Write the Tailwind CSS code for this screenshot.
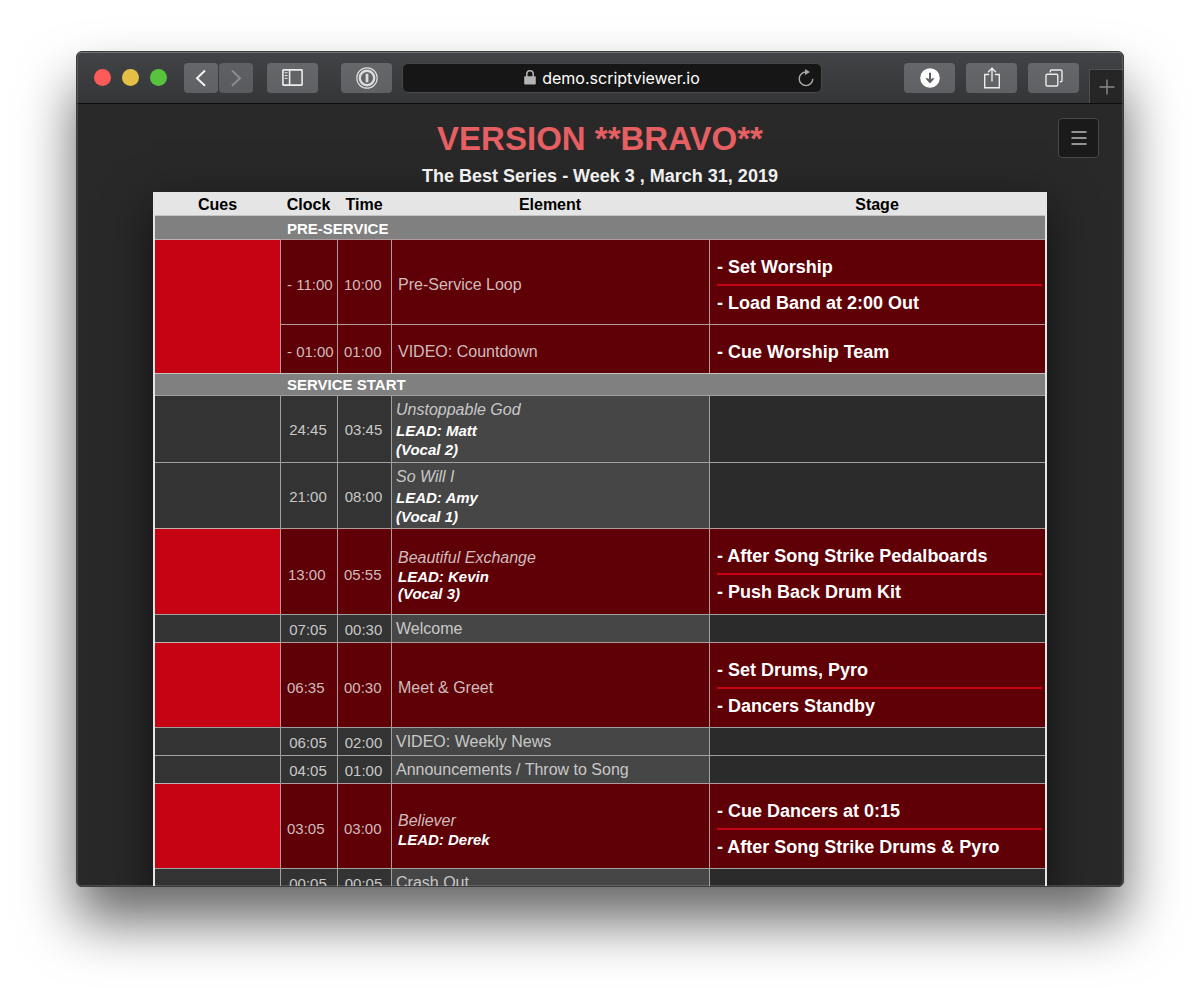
<!DOCTYPE html>
<html lang="en">
  <head>
    <meta charset="UTF-8" />
    <meta name="viewport" content="width=device-width, initial-scale=1.0" />
    <title>ScriptViewer - Version Bravo</title>
    <!-- Tailwind CSS -->
    <script src="https://cdn.jsdelivr.net/npm/@tailwindcss/browser@4"></script>
  </head>
  <body class="bg-white font-['Liberation_Sans',Arial,sans-serif]">
    <div class="h-screen overflow-hidden px-[76px] pt-[51px] pb-[101px]">
      <!-- Browser window -->
      <div class="relative flex h-full flex-col overflow-hidden rounded-md border border-[#3a3b3c] bg-[#292929] shadow-[0_34px_56px_rgba(0,0,0,0.6)]">
        <!-- Toolbar -->
        <div class="flex h-[52px] shrink-0 items-center border-b border-[#0e0e0e] bg-linear-to-b from-[#424346] to-[#353638] pl-[17px]">
          <div class="flex gap-[11px]">
            <span class="size-[17px] rounded-full bg-[#fc5b57]"></span>
            <span class="size-[17px] rounded-full bg-[#e5bf45]"></span>
            <span class="size-[17px] rounded-full bg-[#57c33f]"></span>
          </div>
          <div class="ml-[17px] flex gap-px">
            <button aria-label="Back" class="flex h-[30px] w-[34px] items-center justify-center rounded bg-linear-to-b from-[#66676a] to-[#606164]">
              <svg class="h-5 w-5" viewBox="0 0 20 20" fill="none" stroke="#f4f4f4" stroke-width="2"><path d="M14 2.5 6 10.2l8 7.6" /></svg>
            </button>
            <button aria-label="Forward" class="flex h-[30px] w-[34px] items-center justify-center rounded bg-linear-to-b from-[#5f6063] to-[#5a5b5e]">
              <svg class="h-5 w-5" viewBox="0 0 20 20" fill="none" stroke="#8b8c8e" stroke-width="2"><path d="M6 2.5l8 7.7-8 7.6" /></svg>
            </button>
          </div>
          <button aria-label="Show sidebar" class="ml-3.5 flex h-[30px] w-[51px] items-center justify-center rounded bg-linear-to-b from-[#66676a] to-[#606164]">
            <svg class="h-[17px] w-[21px]" viewBox="0 0 21 17" fill="none" stroke="#ececec" stroke-width="1.6"><rect x="0.9" y="0.9" width="19.2" height="15.2" rx="0.6" /><path d="M7.6 1v15" /><path d="M2.6 3.8h3M2.6 6.5h3M2.6 9.2h3" stroke-width="1.1" /></svg>
          </button>
          <button aria-label="1Password" class="ml-[23px] flex h-[30px] w-[51px] items-center justify-center rounded bg-linear-to-b from-[#66676a] to-[#606164]">
            <svg class="h-[22px] w-[22px]" viewBox="0 0 22 22" fill="none" stroke="#dcdcdc"><circle cx="11" cy="11" r="10.2" stroke-width="1.2" /><circle cx="11" cy="11" r="7.2" stroke-width="2.4" /><path d="M11 6.8v8.4" stroke-width="2.8" /></svg>
          </button>
          <div class="ml-2.5 flex h-[30px] min-w-0 flex-1 items-center rounded-md border border-[#48494b] bg-[#161616] pr-1.5 pl-6 text-white">
            <div class="flex flex-1 items-center justify-center gap-1.5">
              <svg class="h-[15px] w-3" viewBox="0 0 12 15"><path d="M2.8 7V4a3.2 3.2 0 0 1 6.4 0V7" fill="none" stroke="#b4b4b4" stroke-width="1.5" /><rect x="0.2" y="6.2" width="11.6" height="8.4" rx="0.8" fill="#b4b4b4" /></svg>
              <span class="font-[Inter,sans-serif] text-[16px] leading-5">demo.scriptviewer.io</span>
            </div>
            <button aria-label="Reload">
              <svg class="h-[18px] w-[18px]" viewBox="0 0 18 18" fill="none" stroke="#a8a8a8" stroke-width="1.4"><path d="M9 3A6.8 6.8 0 1 0 15.8 9.8" /><path d="M8 0v6l5-3z" fill="#a8a8a8" stroke="none" /></svg>
            </button>
          </div>
          <div class="ml-[82px] flex gap-[11px]">
            <button aria-label="Downloads" class="flex h-[30px] w-[51px] items-center justify-center rounded bg-linear-to-b from-[#66676a] to-[#606164]">
              <svg class="h-5 w-5" viewBox="0 0 20 20"><circle cx="10" cy="10" r="9.8" fill="#fff" /><path d="M10 4.8v7" fill="none" stroke="#5a5b5e" stroke-width="2" /><path d="M5.4 10.2h2.4L10 12l2.2-1.8h2.4L10 15.4z" fill="#5a5b5e" /></svg>
            </button>
            <button aria-label="Share" class="flex h-[30px] w-[51px] items-center justify-center rounded bg-linear-to-b from-[#66676a] to-[#606164]">
              <svg class="h-[22px] w-[18px]" viewBox="0 0 18 22" fill="none" stroke="#ececec" stroke-width="1.4"><path d="M6.2 7.5H1.7v13.2h14.6V7.5h-4.5" /><path d="M9 14.5V1.5M5 5.2l4-4 4 4" /></svg>
            </button>
            <button aria-label="Show all tabs" class="flex h-[30px] w-[51px] items-center justify-center rounded bg-linear-to-b from-[#66676a] to-[#606164]">
              <svg class="h-[18px] w-[18px]" viewBox="0 0 18 18" fill="none" stroke="#ececec" stroke-width="1.4"><rect x="1" y="5.2" width="11.8" height="11.8" rx="1.2" /><path d="M5.3 3.4V2.2a1.2 1.2 0 0 1 1.2-1.2h9.3A1.2 1.2 0 0 1 17 2.2v9.4a1.2 1.2 0 0 1-1.2 1.2h-1" /></svg>
            </button>
          </div>
          <button aria-label="New tab" class="ml-2.5 flex h-[34px] w-[34px] items-center justify-center self-end border-t border-l border-[#4e4f51] bg-[#262627]">
            <svg class="h-4 w-4" viewBox="0 0 16 16" fill="none" stroke="#8a8a8a" stroke-width="1.4"><path d="M8 0.5v15M0.5 8h15" /></svg>
          </button>
        </div>

        <!-- Page -->
        <main class="flex-1 overflow-hidden">
          <header class="grid grid-cols-[1fr_auto_1fr] px-6 pb-1">
            <div class="col-start-2 pt-[15px] text-center font-bold">
              <h1 class="text-[33px] leading-10 text-[#e65f62]">VERSION **BRAVO**</h1>
              <p class="mt-[5px] text-[18px] leading-6 text-[#f0f0f0]">The Best Series - Week 3 , March 31, 2019</p>
            </div>
            <button aria-label="Menu" class="mt-3.5 flex h-10 w-[41px] items-center justify-center justify-self-end rounded border border-[#484848] bg-[#1a1a1a]">
              <svg class="h-[14px] w-4" viewBox="0 0 16 14" stroke="#929292" stroke-width="2"><path d="M0.5 1h15M0.5 7h15M0.5 13h15" /></svg>
            </button>
          </header>

          <!-- Run sheet -->
          <div class="mx-[76px] border-x-2 border-[#e5e5e5] shadow-[0_14px_44px_rgba(0,0,0,0.6)]">
            <table class="w-full table-fixed border-separate border-spacing-0 text-left text-[16px] leading-5 text-[#c8c8c8]">
              <colgroup>
                <col class="w-[125px]" />
                <col class="w-[57px]" />
                <col class="w-[54px]" />
                <col class="w-[318px]" />
                <col />
              </colgroup>
              <thead class="bg-[#e5e5e5] text-center leading-[21px] font-bold text-black">
                <tr>
                  <th class="pt-0.5">Cues</th>
                  <th class="pt-0.5">Clock</th>
                  <th class="pt-0.5">Time</th>
                  <th class="pt-0.5">Element</th>
                  <th class="pt-0.5">Stage</th>
                </tr>
              </thead>
              <tbody>
                <tr class="bg-[#808080] text-[15px] leading-[21px] text-white">
                  <td class="border-t border-[#c4c4c4]"></td>
                  <th colspan="4" class="border-t border-[#c4c4c4] pt-0.5 pl-[7px]">PRE-SERVICE</th>
                </tr>
                <tr class="bg-[#5e0006] text-[#d0bcbd]">
                  <td rowspan="2" class="border-t border-[#c4b0b0] bg-[#c50312]"></td>
                  <td class="border-t border-l border-[#b09a9b] pt-2.5 pb-1 pl-1.5 text-[15px] whitespace-nowrap">- 11:00</td>
                  <td class="border-t border-l border-[#b09a9b] pt-2.5 pb-1 pl-1.5 text-[15px]">10:00</td>
                  <td class="border-t border-l border-[#b09a9b] pt-2.5 pb-1 pl-1.5">Pre-Service Loop</td>
                  <td class="border-t border-l border-[#b09a9b] pt-2.5 pr-[3px] pb-1 pl-[7px] text-[18px] leading-[34px] font-bold text-white">
                    <ul class="divide-y-2 divide-[#c50312]">
                      <li>- Set Worship</li>
                      <li>- Load Band at 2:00 Out</li>
                    </ul>
                  </td>
                </tr>
                <tr class="bg-[#5e0006] text-[#d0bcbd]">
                  <td class="border-t border-l border-[#b09a9b] pt-2.5 pb-1 pl-1.5 text-[15px] whitespace-nowrap">- 01:00</td>
                  <td class="border-t border-l border-[#b09a9b] pt-2.5 pb-1 pl-1.5 text-[15px]">01:00</td>
                  <td class="border-t border-l border-[#b09a9b] pt-2.5 pb-1 pl-1.5">VIDEO: Countdown</td>
                  <td class="border-t border-l border-[#b09a9b] pt-2.5 pr-[3px] pb-1 pl-[7px] text-[18px] leading-[34px] font-bold text-white">
                    <ul>
                      <li>- Cue Worship Team</li>
                    </ul>
                  </td>
                </tr>
                <tr class="bg-[#808080] text-[15px] leading-[21px] text-white">
                  <td class="border-t border-[#c4c4c4]"></td>
                  <th colspan="4" class="border-t border-[#c4c4c4] pl-[7px]">SERVICE START</th>
                </tr>
                <tr class="bg-[#333333]">
                  <td class="border-t border-[#a0a0a0]"></td>
                  <td class="border-t border-l border-[#a0a0a0] pt-0.5 pr-0.5 text-center text-[15px]">24:45</td>
                  <td class="border-t border-l border-[#a0a0a0] pt-0.5 pr-0.5 text-center text-[15px]">03:45</td>
                  <td class="border-t border-l border-[#a0a0a0] bg-[#464646] py-[3px] pl-1 italic">
                    <p class="leading-[22px]">Unstoppable God</p>
                    <p class="text-[15px] leading-[19px] font-bold text-white">LEAD: Matt</p>
                    <p class="text-[15px] leading-[19px] font-bold text-white">(Vocal 2)</p>
                  </td>
                  <td class="border-t border-l border-[#a0a0a0] bg-[#2b2b2b]"></td>
                </tr>
                <tr class="bg-[#333333]">
                  <td class="border-t border-[#a0a0a0]"></td>
                  <td class="border-t border-l border-[#a0a0a0] pt-0.5 pr-0.5 text-center text-[15px]">21:00</td>
                  <td class="border-t border-l border-[#a0a0a0] pt-0.5 pr-0.5 text-center text-[15px]">08:00</td>
                  <td class="border-t border-l border-[#a0a0a0] bg-[#464646] pt-[3px] pb-0.5 pl-1 italic">
                    <p class="leading-[22px]">So Will I</p>
                    <p class="text-[15px] leading-[19px] font-bold text-white">LEAD: Amy</p>
                    <p class="text-[15px] leading-[19px] font-bold text-white">(Vocal 1)</p>
                  </td>
                  <td class="border-t border-l border-[#a0a0a0] bg-[#2b2b2b]"></td>
                </tr>
                <tr class="bg-[#5e0006] text-[#d0bcbd]">
                  <td class="border-t border-[#c4b0b0] bg-[#c50312]"></td>
                  <td class="border-t border-l border-[#b09a9b] pt-2.5 pb-1 pl-[7px] text-[15px]">13:00</td>
                  <td class="border-t border-l border-[#b09a9b] pt-2.5 pb-1 pl-1.5 text-[15px]">05:55</td>
                  <td class="border-t border-l border-[#b09a9b] pt-2.5 pb-1 pl-1.5 leading-5 italic">
                    <p>Beautiful Exchange</p>
                    <p class="text-[15px] leading-[17px] font-bold text-white">LEAD: Kevin</p>
                    <p class="text-[15px] leading-[17px] font-bold text-white">(Vocal 3)</p>
                  </td>
                  <td class="border-t border-l border-[#b09a9b] pt-2.5 pr-[3px] pb-[5px] pl-[7px] text-[18px] leading-[34px] font-bold text-white">
                    <ul class="divide-y-2 divide-[#c50312]">
                      <li>- After Song Strike Pedalboards</li>
                      <li>- Push Back Drum Kit</li>
                    </ul>
                  </td>
                </tr>
                <tr class="bg-[#333333]">
                  <td class="border-t border-[#a0a0a0]"></td>
                  <td class="border-t border-l border-[#a0a0a0] pt-0.5 pr-0.5 text-center text-[15px]">07:05</td>
                  <td class="border-t border-l border-[#a0a0a0] pt-0.5 pr-0.5 text-center text-[15px]">00:30</td>
                  <td class="border-t border-l border-[#a0a0a0] bg-[#464646] pt-1 pb-[3px] pl-1">Welcome</td>
                  <td class="border-t border-l border-[#a0a0a0] bg-[#2b2b2b]"></td>
                </tr>
                <tr class="bg-[#5e0006] text-[#d0bcbd]">
                  <td class="border-t border-[#c4b0b0] bg-[#c50312]"></td>
                  <td class="border-t border-l border-[#b09a9b] pt-2.5 pb-1 pl-1.5 text-[15px]">06:35</td>
                  <td class="border-t border-l border-[#b09a9b] pt-2.5 pb-1 pl-1.5 text-[15px]">00:30</td>
                  <td class="border-t border-l border-[#b09a9b] pt-2.5 pb-1 pl-1.5">Meet &amp; Greet</td>
                  <td class="border-t border-l border-[#b09a9b] pt-2.5 pr-[3px] pb-1 pl-[7px] text-[18px] leading-[34px] font-bold text-white">
                    <ul class="divide-y-2 divide-[#c50312]">
                      <li>- Set Drums, Pyro</li>
                      <li>- Dancers Standby</li>
                    </ul>
                  </td>
                </tr>
                <tr class="bg-[#333333]">
                  <td class="border-t border-[#a0a0a0]"></td>
                  <td class="border-t border-l border-[#a0a0a0] pt-0.5 pr-0.5 text-center text-[15px]">06:05</td>
                  <td class="border-t border-l border-[#a0a0a0] pt-0.5 pr-0.5 text-center text-[15px]">02:00</td>
                  <td class="border-t border-l border-[#a0a0a0] bg-[#464646] pt-1 pb-[3px] pl-1">VIDEO: Weekly News</td>
                  <td class="border-t border-l border-[#a0a0a0] bg-[#2b2b2b]"></td>
                </tr>
                <tr class="bg-[#333333]">
                  <td class="border-t border-[#a0a0a0]"></td>
                  <td class="border-t border-l border-[#a0a0a0] pt-0.5 pr-0.5 text-center text-[15px]">04:05</td>
                  <td class="border-t border-l border-[#a0a0a0] pt-0.5 pr-0.5 text-center text-[15px]">01:00</td>
                  <td class="border-t border-l border-[#a0a0a0] bg-[#464646] pt-1 pb-[3px] pl-1">Announcements / Throw to Song</td>
                  <td class="border-t border-l border-[#a0a0a0] bg-[#2b2b2b]"></td>
                </tr>
                <tr class="bg-[#5e0006] text-[#d0bcbd]">
                  <td class="border-t border-[#c4b0b0] bg-[#c50312]"></td>
                  <td class="border-t border-l border-[#b09a9b] pt-2.5 pb-1 pl-1.5 text-[15px]">03:05</td>
                  <td class="border-t border-l border-[#b09a9b] pt-2.5 pb-1 pl-1.5 text-[15px]">03:00</td>
                  <td class="border-t border-l border-[#b09a9b] pt-2.5 pb-1 pl-1.5 leading-5 italic">
                    <p>Believer</p>
                    <p class="text-[15px] leading-[17px] font-bold text-white">LEAD: Derek</p>
                  </td>
                  <td class="border-t border-l border-[#b09a9b] pt-2.5 pr-[3px] pb-1 pl-[7px] text-[18px] leading-[34px] font-bold text-white">
                    <ul class="divide-y-2 divide-[#c50312]">
                      <li>- Cue Dancers at 0:15</li>
                      <li>- After Song Strike Drums &amp; Pyro</li>
                    </ul>
                  </td>
                </tr>
                <tr class="bg-[#333333]">
                  <td class="border-t border-[#a0a0a0]"></td>
                  <td class="border-t border-l border-[#a0a0a0] pt-0.5 pr-0.5 text-center text-[15px]">00:05</td>
                  <td class="border-t border-l border-[#a0a0a0] pt-0.5 pr-0.5 text-center text-[15px]">00:05</td>
                  <td class="border-t border-l border-[#a0a0a0] bg-[#464646] pt-1 pb-[3px] pl-1">Crash Out</td>
                  <td class="border-t border-l border-[#a0a0a0] bg-[#2b2b2b]"></td>
                </tr>
              </tbody>
            </table>
          </div>
        </main>

        <!-- Light rim round the window edge -->
        <div class="pointer-events-none absolute inset-0 rounded-[5px] border border-t-white/25 border-r-white/15 border-b-white/15 border-l-white/15"></div>
      </div>
    </div>
  </body>
</html>
